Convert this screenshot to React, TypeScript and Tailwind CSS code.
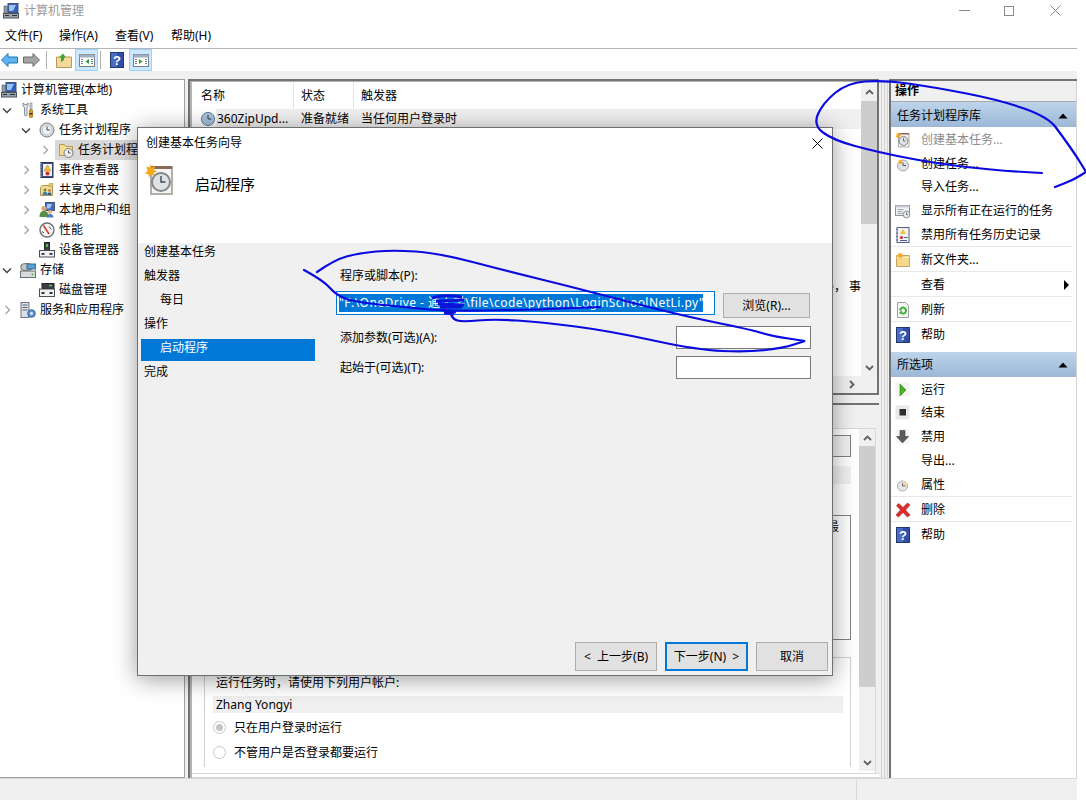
import React from "react";

type IconProps = { size?: number; dim?: boolean };

const Svg = ({ size = 16, dim, children }: IconProps & { children: React.ReactNode }) => (
  <svg width={size} height={size} viewBox="0 0 16 16" className={dim ? "shrink-0 opacity-70" : "shrink-0"}>
    {children}
  </svg>
);

const ComputerIcon = (p: IconProps) => (
  <Svg {...p}>
    <rect x="5" y="0.5" width="10" height="9" fill="#2f5fc4" stroke="#47546a" />
    <path d="M6 2l7 0-3 6H6z" fill="#9cc3f0" />
    <rect x="1" y="3" width="3.5" height="7" fill="#8f9aa8" stroke="#4e5663" strokeWidth="0.6" />
    <rect x="0.5" y="10.5" width="15" height="4.5" fill="#9aa3ad" stroke="#4b525c" />
    <path d="M2 12.5h4M9 12.5h5" stroke="#2e333a" strokeWidth="1.2" />
  </Svg>
);

const ToolsIcon = (p: IconProps) => (
  <Svg {...p}>
    <path d="M3 1v3l1.5 1.5V13a1.3 1.3 0 0 0 2.5 0V5.5L8 4V1L6.800 2.500H4.800z" fill="#dfe3e6" stroke="#6f7780" strokeWidth="0.8" />
    <rect x="10" y="1" width="2" height="7" fill="#cfd3d6" stroke="#7a7f86" strokeWidth="0.6" />
    <rect x="9.300" y="8" width="3.400" height="7.500" rx="1" fill="#e0a015" stroke="#8d6306" strokeWidth="0.6" />
    <rect x="9.500" y="11" width="3" height="1.500" fill="#2b2b2b" />
  </Svg>
);

const ClockIcon = (p: IconProps) => (
  <Svg {...p}>
    <circle cx="8" cy="8" r="7" fill="#d9dee2" stroke="#767c80" />
    <circle cx="8" cy="8" r="4.800" fill="#eef2f5" stroke="#a8aeb3" strokeWidth="0.6" />
    <path d="M8 4.500V8h2.800" fill="none" stroke="#3e4650" strokeWidth="1" />
  </Svg>
);

const BlueClockIcon = (p: IconProps) => (
  <Svg {...p}>
    <circle cx="8" cy="8" r="6.600" fill="#a9c0d8" stroke="#5f7c98" />
    <path d="M8 4v4h3.200" fill="none" stroke="#1f3e5e" strokeWidth="1" />
  </Svg>
);

const FolderClockIcon = (p: IconProps) => (
  <Svg {...p}>
    <path d="M1.500 2.500h5l1.500 2h6.500v9h-13z" fill="#f5dd97" stroke="#b89a55" />
    <circle cx="10.500" cy="11" r="4.500" fill="#e8ecef" stroke="#767c80" />
    <path d="M10.500 8.500V11h2" fill="none" stroke="#3e4650" strokeWidth="0.9" />
  </Svg>
);

const EventIcon = (p: IconProps) => (
  <Svg {...p}>
    <rect x="2" y="0.500" width="12" height="15" fill="#43507d" stroke="#2b3454" />
    <path d="M1 2h2M1 5h2M1 8h2M1 11h2M1 14h2" stroke="#9aa0ad" strokeWidth="1" />
    <rect x="4" y="2" width="9" height="12" fill="#eef0f3" />
    <path d="M8.500 3L12 9H5z" fill="#f2c230" stroke="#a9831a" strokeWidth="0.5" />
    <circle cx="8.500" cy="11.500" r="2" fill="#c8322a" />
  </Svg>
);

const ShareIcon = (p: IconProps) => (
  <Svg {...p}>
    <path d="M3 3.500h10.500v10H1.500v-8z" fill="#f2d88e" stroke="#b3954e" />
    <path d="M10 1.500h4v3h-4z" fill="#e8c86e" stroke="#b3954e" strokeWidth="0.6" />
    <circle cx="6" cy="8" r="1.500" fill="#5c8a4a" />
    <path d="M3.500 13c0-2.500 1-3.200 2.500-3.200s2.500.7 2.500 3.200z" fill="#3e7fb8" />
    <circle cx="10.500" cy="8.500" r="1.300" fill="#b36a3a" />
    <path d="M8.500 13c0-2 1-2.800 2-2.800s2 .8 2 2.800z" fill="#2e5f94" />
  </Svg>
);

const UsersIcon = (p: IconProps) => (
  <Svg {...p}>
    <rect x="6.500" y="0.500" width="9" height="8" fill="#3e6cc4" stroke="#4b5665" />
    <path d="M8 2h5l-2 4.500H8z" fill="#a6c8ee" />
    <circle cx="5" cy="6.500" r="2.600" fill="#d9a66e" />
    <path d="M0.500 15c0-4.500 2-6 4.500-6s4.500 1.500 4.500 6z" fill="#5a8d45" />
    <circle cx="11" cy="10" r="2" fill="#e0b482" />
    <path d="M7.500 15.500c0-2.500 1.500-3.500 3.500-3.500s3.500 1 3.500 3.500z" fill="#4b7fc0" />
  </Svg>
);

const PerfIcon = (p: IconProps) => (
  <Svg {...p}>
    <circle cx="8" cy="8" r="7" fill="#f6f6f6" stroke="#6f6f6f" strokeWidth="1.400" />
    <path d="M4.500 3.500L10 12" stroke="#cf2d22" strokeWidth="1.400" />
    <path d="M10 4.500l2.500 3M3 9.500l2 1.500" stroke="#474747" strokeWidth="1" />
  </Svg>
);

const DeviceIcon = (p: IconProps) => (
  <Svg {...p}>
    <rect x="5.500" y="0.500" width="5" height="8" fill="#3a3f45" stroke="#23272b" />
    <rect x="7" y="2" width="2" height="3" fill="#58b848" />
    <rect x="0.500" y="8.500" width="15" height="6.500" fill="#eef0f2" stroke="#4b4f55" />
    <rect x="2.500" y="11" width="3" height="1.800" fill="#2f3338" />
    <rect x="10.500" y="11" width="3" height="1.800" fill="#2f3338" />
  </Svg>
);

const StorageIcon = (p: IconProps) => (
  <Svg {...p}>
    <path d="M1 3a6 2.500 0 0 1 11 0v4a6 2.500 0 0 1-11 0z" fill="#c0c9c4" stroke="#6a726e" />
    <rect x="7" y="2" width="8.500" height="5" fill="#56a0d8" stroke="#3b6c92" />
    <rect x="0.500" y="9" width="15" height="6.500" fill="#d8dbdc" stroke="#6a6e72" />
    <circle cx="12.500" cy="12.500" r="1" fill="#5fae3a" />
  </Svg>
);

const DiskIcon = (p: IconProps) => (
  <Svg {...p}>
    <rect x="3" y="1.500" width="12" height="5" fill="#3a3f45" stroke="#23272b" />
    <rect x="10" y="2.800" width="3" height="1.500" fill="#6fc255" />
    <rect x="0.500" y="7" width="15" height="7.500" fill="#eef0f2" stroke="#4b4f55" />
    <rect x="2.500" y="10" width="3" height="2" fill="#2f3338" />
    <rect x="10.500" y="10" width="3" height="2" fill="#2f3338" />
  </Svg>
);

const ServicesIcon = (p: IconProps) => (
  <Svg {...p}>
    <rect x="1" y="0.500" width="8" height="15" fill="#dbe0e6" stroke="#6b7482" />
    <path d="M2.500 3h5M2.500 5.500h5M2.500 8h5" stroke="#5a6675" strokeWidth="1" />
    <circle cx="11.500" cy="11.500" r="3.800" fill="#5d91cf" stroke="#39679e" />
    <circle cx="11.500" cy="11.500" r="1.400" fill="#e8f0f8" />
  </Svg>
);

// 32px in the dialog header, 16px in the actions list
const WizardIcon = (p: IconProps) => (
  <Svg {...p}>
    <rect x="3.500" y="1.500" width="10.500" height="13.500" fill="#f5f5f1" stroke="#b0afa9" />
    <rect x="3.500" y="1" width="10.500" height="1.500" fill="#8a6a56" />
    <circle cx="8.500" cy="9" r="4.500" fill="#dfe3e6" stroke="#80868b" />
    <path d="M8.500 6v3h2.200" fill="none" stroke="#3e4650" strokeWidth="0.7" />
    <path d="M3 0l.7 1.800L5.600 1 4.900 2.900l1.700.8-1.800.7.500 1.900-1.700-1-1.100 1.600-.3-1.900-1.900-.1 1.400-1.300L1.300 1.100l1.500.7z" fill="#f4a91d" />
  </Svg>
);

const NewTaskIcon = (p: IconProps) => (
  <Svg {...p}>
    <circle cx="8" cy="9.500" r="5.500" fill="#dfe3e6" stroke="#a2a7ab" />
    <path d="M8 6.500v3h3" fill="none" stroke="#3e4650" strokeWidth="0.9" />
    <path d="M5 3l.8 1.500 1.500-.6-.5 1.600 1.400.8-1.500.5.200 1.500-1.400-.9-1 1.100-.2-1.500-1.500-.2 1.200-1-.8-1.400 1.600.3z" fill="#f4a91d" />
  </Svg>
);

const RunningIcon = (p: IconProps) => (
  <Svg {...p}>
    <rect x="0.500" y="2.500" width="14" height="10" fill="#f1f1f1" stroke="#8b8f94" />
    <rect x="0.500" y="2.500" width="14" height="2" fill="#c9ced4" />
    <path d="M2.500 6.500h6M2.500 8.500h5M2.500 10.500h5" stroke="#8a9099" strokeWidth="0.8" />
    <circle cx="11.500" cy="11.500" r="3.400" fill="#e6e8ea" stroke="#7a7f85" strokeWidth="0.8" />
    <path d="M11.500 9.500v2h1.500" fill="none" stroke="#3e4650" strokeWidth="0.7" />
  </Svg>
);

const HistoryIcon = (p: IconProps) => (
  <Svg {...p}>
    <rect x="2" y="0.500" width="12" height="15" fill="#f0f2f6" stroke="#4f5e84" />
    <path d="M1 2.500h2M1 6h2M1 9.500h2M1 13h2" stroke="#687287" strokeWidth="1" />
    <path d="M8 2l3 5H5z" fill="#f2c230" />
    <circle cx="6.500" cy="10.500" r="1.600" fill="#c8322a" />
    <path d="M9 10.500h3.500M5 13.500h7" stroke="#4f5e84" strokeWidth="1" />
  </Svg>
);

const NewFolderIcon = (p: IconProps) => (
  <Svg {...p}>
    <path d="M1.500 3.500h13v11h-13z" fill="#f5d88a" stroke="#c6a55e" />
    <path d="M1.500 5.500h13" stroke="#fbedc4" />
    <path d="M5 0l.9 1.900 2-.6-.8 2 1.700 1-2 .5-.1 1.700-1.500-1.100-1.500 1 .1-1.700-1.900-.5 1.600-1-.8-2 2 .6z" fill="#f4a91d" />
  </Svg>
);

const RefreshIcon = (p: IconProps) => (
  <Svg {...p}>
    <path d="M2.500 0.500h8l3 3v12h-11z" fill="#f6f6f6" stroke="#9aa0a6" />
    <path d="M5 8.500a3 3 0 1 1 1.200 2.500" fill="none" stroke="#3fae3a" strokeWidth="2" />
    <path d="M3.500 11.500h3.500V8z" fill="#3fae3a" />
  </Svg>
);

const HelpIcon = ({ size = 14 }: { size?: number }) => (
  <svg width={size} height={size + 2} viewBox="0 0 14 16" className="shrink-0">
    <rect x="0.500" y="0.500" width="13" height="15" fill="#2f4fa6" stroke="#23386f" />
    <rect x="1" y="1" width="6" height="14" fill="#4a6bc4" />
    <text x="7" y="13" textAnchor="middle" fontSize="13" fontWeight="700" fill="#fff" fontFamily="Liberation Sans, sans-serif">
      ?
    </text>
  </svg>
);

const PlayIcon = () => (
  <Svg>
    <rect x="0.500" y="0.500" width="14" height="14" fill="#f4f4f4" />
    <path d="M5 2l6 6-6 6z" fill="#46b31f" stroke="#2f7e12" strokeWidth="0.6" />
  </Svg>
);

const StopIcon = () => (
  <Svg>
    <rect x="0.500" y="0.500" width="14" height="14" fill="#e9e9e9" />
    <rect x="4.500" y="4" width="6.500" height="6.500" fill="#2e2e2e" />
  </Svg>
);

const DownIcon = () => (
  <Svg>
    <rect x="0.500" y="0.500" width="14" height="14" fill="#f4f4f4" />
    <path d="M5 1.500h5v6h3.500L7.500 14 1.500 7.500H5z" fill="#5b5b5b" stroke="#3f3f3f" strokeWidth="0.6" />
  </Svg>
);

const PropsIcon = () => (
  <Svg>
    <circle cx="7.500" cy="9" r="5" fill="#e4e7ea" stroke="#a7acb0" />
    <path d="M7.500 4A5 5 0 0 1 12.500 9H7.500z" fill="#efd9a5" />
    <path d="M7.500 6v3h2.800" fill="none" stroke="#4e555c" strokeWidth="0.8" />
  </Svg>
);

const DeleteIcon = () => (
  <svg width="16" height="16" viewBox="0 0 16 16" className="shrink-0">
    <path d="M1.500 3.500L3.800 1.500 8 5.500 12.500 1 15 3 10.500 8 15 13l-2.500 2L8 10.500 3.500 15 1 13l4.500-5z" fill="#df2a2a" stroke="#a51e1e" strokeWidth="0.6" />
  </svg>
);

const Blank = () => <span className="w-4 h-4 shrink-0" />;

const ChevronOpen = () => (
  <svg width="10" height="7" viewBox="0 0 10 7" className="shrink-0">
    <path d="M1 1.500l4 4 4-4" fill="none" stroke="#404040" strokeWidth="1.400" />
  </svg>
);

const ChevronClosed = () => (
  <svg width="7" height="10" viewBox="0 0 7 10" className="shrink-0">
    <path d="M1.500 1l4 4-4 4" fill="none" stroke="#a6a6a6" strokeWidth="1.400" />
  </svg>
);

const TriUp = () => (
  <svg width="10" height="6" viewBox="0 0 10 6" className="shrink-0">
    <path d="M0.500 5.500L5 .5l4.500 5z" fill="#000" />
  </svg>
);

const ScrollUp = () => (
  <svg width="9" height="6" viewBox="0 0 9 6">
    <path d="M1 5l3.500-3.500L8 5" fill="none" stroke="#606060" strokeWidth="1.800" />
  </svg>
);

const ScrollDown = () => (
  <svg width="9" height="6" viewBox="0 0 9 6">
    <path d="M1 1l3.500 3.500L8 1" fill="none" stroke="#606060" strokeWidth="1.800" />
  </svg>
);

const treeRows = [
  { label: "计算机管理(本地)", icon: <ComputerIcon />, box: "w-px", chevron: null, indent: "", sel: false },
  { label: "系统工具", icon: <ToolsIcon />, box: "w-5 pl-[2px]", chevron: "open", indent: "", sel: false },
  { label: "任务计划程序", icon: <ClockIcon />, box: "w-5 pl-[2px]", chevron: "open", indent: "pl-[19px]", sel: false },
  { label: "任务计划程序库", icon: <FolderClockIcon />, box: "w-[17px] pl-[4px]", chevron: "closed", indent: "pl-[38px]", sel: true },
  { label: "事件查看器", icon: <EventIcon />, box: "w-5 pl-[4px]", chevron: "closed", indent: "pl-[19px]", sel: false },
  { label: "共享文件夹", icon: <ShareIcon />, box: "w-5 pl-[4px]", chevron: "closed", indent: "pl-[19px]", sel: false },
  { label: "本地用户和组", icon: <UsersIcon />, box: "w-5 pl-[4px]", chevron: "closed", indent: "pl-[19px]", sel: false },
  { label: "性能", icon: <PerfIcon />, box: "w-5 pl-[4px]", chevron: "closed", indent: "pl-[19px]", sel: false },
  { label: "设备管理器", icon: <DeviceIcon />, box: "w-5", chevron: null, indent: "pl-[19px]", sel: false },
  { label: "存储", icon: <StorageIcon />, box: "w-5 pl-[2px]", chevron: "open", indent: "", sel: false },
  { label: "磁盘管理", icon: <DiskIcon />, box: "w-5", chevron: null, indent: "pl-[19px]", sel: false },
  { label: "服务和应用程序", icon: <ServicesIcon />, box: "w-5 pl-[4px]", chevron: "closed", indent: "", sel: false },
];

const libraryActions = [
  { label: "创建基本任务...", icon: <WizardIcon />, muted: true },
  { label: "创建任务...", icon: <NewTaskIcon /> },
  { label: "导入任务...", icon: <Blank /> },
  { label: "显示所有正在运行的任务", icon: <RunningIcon /> },
  { label: "禁用所有任务历史记录", icon: <HistoryIcon />, line: true },
  { label: "新文件夹...", icon: <NewFolderIcon />, line: true },
  { label: "查看", icon: <Blank />, line: true, more: true },
  { label: "刷新", icon: <RefreshIcon />, line: true },
  { label: "帮助", icon: <HelpIcon /> },
];

const selectedActions = [
  { label: "运行", icon: <PlayIcon /> },
  { label: "结束", icon: <StopIcon /> },
  { label: "禁用", icon: <DownIcon /> },
  { label: "导出...", icon: <Blank /> },
  { label: "属性", icon: <PropsIcon />, line: true },
  { label: "删除", icon: <DeleteIcon />, line: true },
  { label: "帮助", icon: <HelpIcon /> },
];

type Action = { label: string; icon: React.ReactNode; muted?: boolean; line?: boolean; more?: boolean };

const ActionList = ({ title, items }: { title: string; items: Action[] }) => (
  <div>
    <div className="h-[25px] pt-[2px] flex items-center justify-between pl-[6px] pr-[9px] bg-gradient-to-b from-[#bdd4eb] to-[#9cb8d6]">
      <span>{title}</span>
      <TriUp />
    </div>
    <div>
      {items.map((a) => (
        <div key={a.label} className={`flex items-center pl-[4px] pt-[2px] ${a.line ? "h-[25px] border-b border-[#e8e8e8] mr-[5px]" : "h-[23.75px]"} ${a.more ? "pr-[3px]" : ""}`}>
          <span className="w-4 flex justify-center">{a.icon}</span>
          <span className={`ml-[10px] ${a.muted ? "text-[#8c8c8c]" : "text-black"}`}>{a.label}</span>
          {a.more && <span className="ml-auto w-0 h-0 border-y-[5px] border-y-transparent border-l-[5px] border-l-black" />}
        </div>
      ))}
    </div>
  </div>
);

const Radio = ({ checked }: { checked?: boolean }) => (
  <span className="w-[13px] h-[13px] rounded-full border border-[#c8c8c8] bg-white flex items-center justify-center shrink-0">
    {checked && <span className="w-[7px] h-[7px] rounded-full bg-[#c4c4c4]" />}
  </span>
);

const DialogButton = ({ label, width, primary }: { label: string; width: string; primary?: boolean }) => (
  <div className={`${width} h-[29px] flex items-center justify-center bg-[#e1e1e1] ${primary ? "border-2 border-[#0078d7]" : "border border-[#adadad]"}`}>
    {label}
  </div>
);

const wizardSteps = [
  { label: "创建基本任务", sub: false },
  { label: "触发器", sub: false },
  { label: "每日", sub: true },
  { label: "操作", sub: false },
];

const WizardDialog = () => (
  <div className="absolute left-[137px] top-[127px] w-[696px] h-[549px] flex flex-col bg-[#f0f0f0] border border-[#6f6f6f] shadow-[0_3px_22px_rgba(0,0,0,0.4)]">
    <div className="h-[115px] bg-white shrink-0">
      <div className="h-[30px] flex items-center justify-between pl-2 pr-[9px]">
        <span>创建基本任务向导</span>
        <svg width="11" height="11" viewBox="0 0 11 11">
          <path d="M.5.5l10 10M10.500.5l-10 10" stroke="#000" strokeWidth="1" />
        </svg>
      </div>
      <div className="flex items-center pl-[6px] pt-[6px]">
        <WizardIcon size={32} />
        <span className="ml-[19px] text-[15px] leading-5 mt-[7px]">启动程序</span>
      </div>
    </div>

    <div className="flex flex-1 min-h-0">
      <div className="w-[174px] ml-[3px] shrink-0 flex flex-col gap-2">
        {wizardSteps.map((s) => (
          <div key={s.label} className={`h-4 leading-[18px] ${s.sub ? "pl-[19px]" : "pl-[3px]"}`}>
            {s.label}
          </div>
        ))}
        <div className="h-[22px] -mb-[6px] pl-[19px] leading-[18px] bg-[#0078d7] text-white">启动程序</div>
        <div className="h-4 leading-[18px] pl-[3px]">完成</div>
      </div>

      <div className="pl-[21px] pt-6 w-[499px]">
        <div className="h-4 leading-[18px] pl-[4px]">程序或脚本(P):</div>
        <div className="flex items-start mt-2">
          <div className="w-[379px] h-6 border border-[#0078d7] bg-white pl-[2px] pt-[2px]">
            <div className="w-[364px] h-[18px] leading-[18px] tracking-[0.45px] bg-[#0078d7] text-white whitespace-nowrap overflow-hidden">
              "F:\OneDrive - 通大学\file\code\python\LoginSchoolNetLi.py"
            </div>
          </div>
          <div className="ml-2 mt-[2px] w-[87px] h-[25px] flex items-center justify-center bg-[#e1e1e1] border border-[#adadad]">浏览(R)...</div>
        </div>
        <div className="flex items-center justify-between h-[23px] mt-2 w-[475px] pl-[4px]">
          <span>添加参数(可选)(A):</span>
          <span className="w-[135px] h-[23px] bg-white border border-[#7a7a7a]" />
        </div>
        <div className="flex items-center justify-between h-[23px] mt-[7px] w-[475px] pl-[4px]">
          <span>起始于(可选)(T):</span>
          <span className="w-[135px] h-[23px] bg-white border border-[#7a7a7a]" />
        </div>
      </div>
    </div>

    <div className="flex justify-end gap-2 pr-[4px] pb-[4px] shrink-0">
      <DialogButton label={"<\u00a0\u00a0上一步(B)"} width="w-[82px]" />
      <DialogButton label={"下一步(N)\u00a0\u00a0>"} width="w-[83px]" primary />
      <DialogButton label="取消" width="w-[72px]" />
    </div>
  </div>
);

// turns a list of points into a smooth pen stroke
const stroke = (pts: number[][]) => {
  let d = `M${pts[0][0]} ${pts[0][1]}`;
  for (let i = 1; i < pts.length - 1; i++) {
    const mx = (pts[i][0] + pts[i + 1][0]) / 2;
    const my = (pts[i][1] + pts[i + 1][1]) / 2;
    d += ` Q${pts[i][0]} ${pts[i][1]} ${mx} ${my}`;
  }
  const last = pts[pts.length - 1];
  return `${d} L${last[0]} ${last[1]}`;
};

const inkStrokes = [
  [[1042, 173], [1000, 171], [933, 163], [877, 152], [833, 140], [813, 125], [823, 103], [847, 83], [883, 80], [933, 87], [1000, 100], [1048, 117], [1063, 137], [1077, 157], [1086, 172], [1086, 172], [1073, 180], [1055, 187]],
  [[317, 272], [334, 260], [359, 253], [393, 250], [438, 253], [507, 271], [576, 288], [679, 315], [748, 329], [772, 336], [805, 341], [805, 341], [783, 348], [748, 352], [697, 350], [610, 331], [541, 322], [493, 319], [462, 322], [453, 319], [450, 312]],
  [[304, 270], [324, 281], [336, 295], [355, 302], [403, 307], [445, 311], [520, 310], [600, 307]],
];

const Ink = () => (
  <svg width="1086" height="800" viewBox="0 0 1086 800" className="absolute left-0 top-0 pointer-events-none">
    {inkStrokes.map((s, i) => (
      <path key={i} d={stroke(s)} fill="none" stroke="#0a0ae0" strokeWidth="2.200" strokeLinecap="round" />
    ))}
    <path d="M432 298q12-4 30-1M436 301l28-1M438 304l26 1M440 307l22 0M442 310l14 2M444 313l10 1" fill="none" stroke="#0a14d8" strokeWidth="3" />
  </svg>
);

export default function App() {
  return (
    <div className="relative w-[1086px] h-[800px] overflow-hidden bg-white text-black text-xs font-['Noto_Sans','Noto_Sans_CJK_SC',sans-serif]">
      <div className="w-[1077px] h-full flex flex-col">
        {/* title bar */}
        <div className="h-6 shrink-0 flex items-center pl-[3px] pb-[3px]">
          <ComputerIcon />
          <span className="ml-[5px] text-[#9a9a9a]">计算机管理</span>
          <div className="ml-auto flex items-center">
            <span className="w-[11px] h-px bg-[#8a8a8a]" />
            <span className="ml-[34px] w-[10px] h-[10px] border border-[#8a8a8a]" />
            <svg width="11" height="11" viewBox="0 0 11 11" className="ml-[36px] mr-[16px]">
              <path d="M.5.5l10 10M10.500.5l-10 10" stroke="#8a8a8a" strokeWidth="1" />
            </svg>
          </div>
        </div>

        {/* menu */}
        <div className="h-[25px] shrink-0 flex items-center pl-[5px] border-b border-[#b4b4b4]">
          <span className="w-[54px]">文件(F)</span>
          <span className="w-14">操作(A)</span>
          <span className="w-14">查看(V)</span>
          <span>帮助(H)</span>
        </div>

        {/* toolbar */}
        <div className="h-[22px] shrink-0 flex items-center">
          <svg width="17" height="14" viewBox="0 0 17 14" className="ml-px">
            <path d="M.5 7L7 .5V4h9.500v6H7v3.500z" fill="#5eb4ec" stroke="#1b76bd" />
          </svg>
          <svg width="17" height="14" viewBox="0 0 17 14" className="ml-[5px]">
            <path d="M16.500 7L10 .5V4H.5v6H10v3.500z" fill="#a4a4a4" stroke="#6a6a6a" />
          </svg>
          <span className="ml-[6px] w-px h-[18px] bg-[#b0b0b0]" />
          <svg width="16" height="15" viewBox="0 0 16 15" className="ml-[9px]">
            <path d="M.5 4h15v10.500H.5z" fill="#f3d99a" stroke="#b8985a" />
            <path d="M5 9V4.500H3L7 .5l3 4H8V7z" fill="#3da535" />
          </svg>
          <span className="ml-[3px] w-[23px] h-[22px] flex items-center justify-center bg-[#cce8ff] border border-[#99d1ff]">
            <svg width="16" height="13" viewBox="0 0 16 13">
              <rect x=".5" y=".5" width="15" height="12" fill="#fff" stroke="#77818c" />
              <rect x=".5" y=".5" width="15" height="3" fill="#9fb0c2" />
              <path d="M2 5.500h2M2 7.500h2M2 9.500h2M12 5.500h2M12 7.500h2M12 9.500h2" stroke="#77818c" />
              <path d="M10 5v5L6.500 7.500z" fill="#2e9e36" />
            </svg>
          </span>
          <span className="ml-[2px] w-px h-[18px] bg-[#b0b0b0]" />
          <span className="ml-[9px]">
            <HelpIcon />
          </span>
          <span className="ml-[5px] w-[23px] h-[22px] flex items-center justify-center bg-[#cce8ff] border border-[#99d1ff]">
            <svg width="16" height="13" viewBox="0 0 16 13">
              <rect x=".5" y=".5" width="15" height="12" fill="#fff" stroke="#77818c" />
              <rect x=".5" y=".5" width="15" height="3" fill="#9fb0c2" />
              <path d="M2 5.500h2M2 7.500h2M2 9.500h2M12 5.500h2M12 7.500h2M12 9.500h2" stroke="#77818c" />
              <path d="M6 5v5l3.500-2.500z" fill="#2e9e36" />
            </svg>
          </span>
        </div>

        <div className="h-2 shrink-0 bg-[#f0f0f0]" />

        {/* panes */}
        <div className="h-[699px] shrink-0 flex bg-[#f0f0f0]">
          <div className="w-[185px] shrink-0 bg-white border-r border-b border-t border-[#a0a0a0] overflow-hidden">
            {treeRows.map((r) => (
              <div key={r.label} className={`h-5 flex items-center ${r.indent}`}>
                <span className={`${r.box} shrink-0 flex items-center`}>
                  {r.chevron === "open" && <ChevronOpen />}
                  {r.chevron === "closed" && <ChevronClosed />}
                </span>
                <span className={`flex items-center flex-1 h-5 whitespace-nowrap ${r.sel ? "bg-[#d9d9d9] pl-[3px]" : ""}`}>
                  {r.icon}
                  <span className="ml-1">{r.label}</span>
                </span>
              </div>
            ))}
          </div>

          {/* centre column */}
          <div className="w-[700px] shrink-0 ml-[3px] pr-[2px] border-r border-[#d4d4d4]">
            <div className="h-full pr-[2px] border-r border-[#d4d4d4]">
              <div className="h-full pr-[2px] border-r border-[#d4d4d4] flex flex-col">
                {/* task list */}
                <div className="h-[316px] shrink-0 flex flex-col border-2 border-[#727272] bg-[#f0f0f0]">
                  <div className="flex-1 min-h-0 flex border-l-2 border-t border-[#b4b4b4]">
                    <div className="flex-1 min-w-0 bg-white flex flex-col">
                      <div className="h-[27px] shrink-0 flex items-center">
                        <span className="w-[102px] pl-[9px] h-full flex items-center border-r border-[#e4e4e4]">名称</span>
                        <span className="w-[60px] pl-[7px] h-full flex items-center border-r border-[#e4e4e4]">状态</span>
                        <span className="pl-[7px]">触发器</span>
                      </div>
                      <div className="h-5 shrink-0 flex items-center pl-2 whitespace-nowrap">
                        <BlueClockIcon />
                        <div className="flex-1 h-5 flex items-center bg-[#f0f0f0]">
                          <span className="w-[78px] pl-px">360ZipUpd...</span>
                          <span className="w-[60px] pl-[7px]">准备就绪</span>
                          <span className="pl-[7px]">当任何用户登录时</span>
                        </div>
                      </div>
                      <div className="mt-[150px] h-4 leading-4 text-right overflow-hidden">e， 事</div>
                    </div>
                    <div className="w-[16px] shrink-0 flex flex-col items-center bg-[#f0f0f0]">
                      <div className="h-[19px] flex items-center justify-center">
                        <ScrollUp />
                      </div>
                      <div className="w-full h-[123px] bg-[#cdcdcd]" />
                      <div className="mt-auto h-[16px] flex items-center justify-center">
                        <ScrollDown />
                      </div>
                    </div>
                  </div>
                  <div className="h-[17px] shrink-0 flex items-center justify-end pr-[22px] bg-[#f0f0f0]">
                    <svg width="6" height="9" viewBox="0 0 6 9">
                      <path d="M1 1l3.500 3.500L1 8" fill="none" stroke="#606060" strokeWidth="1.800" />
                    </svg>
                  </div>
                </div>

                {/* detail panel */}
                <div className="mt-2 flex-1 min-h-0 flex flex-col border-t-2 border-l-2 border-[#727272]">
                  <div className="flex-1 min-h-0 flex flex-col border-l-2 border-[#b4b4b4] bg-[#f0f0f0]">
                    <div className="h-[23px] shrink-0" />
                    <div className="flex-1 min-h-0 flex bg-white border-t border-r border-[#d8d8d8] mr-[3px]">
                      <div className="flex-1 min-w-0 pl-[12px] pr-[8px] pt-[6px]">
                        <div className="h-[22px] border border-[#808080] bg-[#f0f0f0]" />
                        <div className="mt-[9px] h-[18px] bg-[#f0f0f0]" />
                        <div className="mt-[31px] h-[125px] border border-[#808080] flex justify-end items-start pt-[3px] pr-[11px]">最</div>
                        <div className="mt-[17px] h-[110px] border-t border-x border-[#d0d0d0]">
                          <div className="pl-[11px] pt-[18px] h-[38px] leading-[14px]">运行任务时，请使用下列用户帐户:</div>
                          <div className="ml-[8px] mr-[7px] h-[17px] pl-[3px] leading-[17px] bg-[#f0f0f0]">Zhang Yongyi</div>
                          <div className="flex items-center h-[25px] mt-[2px] pl-[8px] gap-2">
                            <Radio checked />
                            <span>只在用户登录时运行</span>
                          </div>
                          <div className="flex items-center h-[25px] pl-[8px] gap-2">
                            <Radio />
                            <span>不管用户是否登录都要运行</span>
                          </div>
                        </div>
                      </div>
                      <div className="w-[16px] shrink-0 mb-[2px] flex flex-col items-center bg-[#f0f0f0]">
                        <div className="h-[17px] flex items-center justify-center">
                          <ScrollUp />
                        </div>
                        <div className="w-full h-[241px] bg-[#cdcdcd]" />
                        <div className="mt-auto h-[17px] flex items-center justify-center">
                          <ScrollDown />
                        </div>
                      </div>
                    </div>
                    <div className="h-[5px] shrink-0 bg-white border-y border-[#d8d8d8]" />
                  </div>
                </div>
              </div>
            </div>
          </div>

          {/* actions */}
          <div className="w-[188px] shrink-0 ml-px bg-white border-l-2 border-t-2 border-[#727272] flex flex-col relative">
            <div className="h-[21px] shrink-0 flex items-center pl-[4px] bg-[#f0f0f0] border-b border-[#a8a8a8] font-semibold">操作</div>
            <ActionList title="任务计划程序库" items={libraryActions} />
            <div className="h-[6px] shrink-0" />
            <ActionList title="所选项" items={selectedActions} />
            <div className="absolute right-0 top-0 bottom-0 w-px bg-[#d4d4d4]" />
          </div>
        </div>

        {/* status bar */}
        <div className="flex-1 flex bg-[#f0f0f0] border-t border-[#d8d8d8]">
          <div className="w-[857px] border-r border-[#d8d8d8]" />
        </div>
      </div>

      <WizardDialog />
      <Ink />
    </div>
  );
}
